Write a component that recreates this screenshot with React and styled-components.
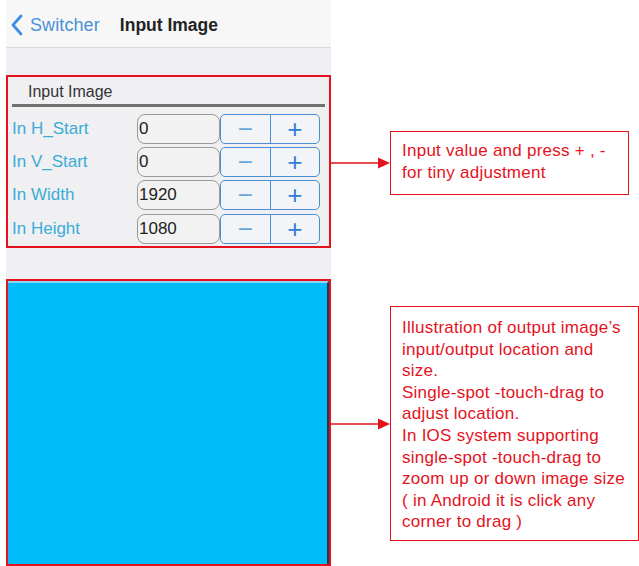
import React from 'react'
import styled, { createGlobalStyle } from 'styled-components'

const GlobalStyle = createGlobalStyle`
  html, body { margin: 0; padding: 0; background: #ffffff; }
  body { font-family: "Liberation Sans", Arial, sans-serif; }
`

const RED = '#e5121d'

const rows = [
  { label: 'In H_Start', value: '0' },
  { label: 'In V_Start', value: '0' },
  { label: 'In Width', value: '1920' },
  { label: 'In Height', value: '1080' },
]

const App = () => {
  return (
    <Page>
      <GlobalStyle />
      <Phone>
        <NavBar>
          <Back>
            <svg width="13" height="22" viewBox="0 0 13 22">
              <path d="M11 2 L3 11 L11 20" fill="none" stroke="#3f8ee0" strokeWidth="2.8" strokeLinecap="round" strokeLinejoin="round" />
            </svg>
            <span>Switcher</span>
          </Back>
          <Title>Input Image</Title>
        </NavBar>
        <Marked $top={27}>
          <Panel>
            <PanelHead>Input Image</PanelHead>
            {rows.map((r) => (
              <Row key={r.label}>
                <Label>{r.label}</Label>
                <Field>{r.value}</Field>
                <Stepper>
                  <StepBtn $minus>&minus;</StepBtn>
                  <StepBtn>+</StepBtn>
                </Stepper>
              </Row>
            ))}
          </Panel>
        </Marked>
        <Marked $top={31} $grow>
          <Preview />
        </Marked>
      </Phone>

      <Notes>
        <Note $top={131}>
          <Arrow>
            <svg width="59" height="14" viewBox="0 0 59 14">
              <line x1="0" y1="7" x2="48" y2="7" stroke={RED} strokeWidth="1.6" />
              <path d="M47 1.5 L59 7 L47 12.5 Z" fill={RED} />
            </svg>
          </Arrow>
          <NoteBox $w={239} $h={64} $pt={8}>
            Input value and press + , -<br />
            for tiny adjustment
          </NoteBox>
        </Note>
        <Note $top={111}>
          <Arrow>
            <svg width="59" height="14" viewBox="0 0 59 14">
              <line x1="0" y1="7" x2="48" y2="7" stroke={RED} strokeWidth="1.6" />
              <path d="M47 1.5 L59 7 L47 12.5 Z" fill={RED} />
            </svg>
          </Arrow>
          <NoteBox $w={249} $h={235} $pt={10}>
            Illustration of output image’s<br />
            input/output location and<br />
            size.<br />
            Single-spot -touch-drag to<br />
            adjust location.<br />
            In IOS system supporting<br />
            single-spot -touch-drag to<br />
            zoom up or down image size<br />
            ( in Android it is click any<br />
            corner to drag )
          </NoteBox>
        </Note>
      </Notes>
    </Page>
  )
}

const Page = styled.div`
  display: flex;
  width: 639px;
  height: 566px;
  overflow: hidden;
  background: #ffffff;
`

const Phone = styled.div`
  margin-left: 6px;
  width: 325px;
  flex-shrink: 0;
  display: flex;
  flex-direction: column;
  background: #efeff4;
`

const NavBar = styled.div`
  height: 48px;
  box-sizing: border-box;
  display: flex;
  align-items: center;
  background: #f7f7f8;
  border-bottom: 1px solid #d9d9de;
  padding: 3px 0 0 4px;
`

const Back = styled.div`
  display: flex;
  align-items: center;
  gap: 7px;
  color: #4a90d6;
  font-size: 18px;
  span { letter-spacing: 0.1px; }
`

const Title = styled.div`
  margin-left: 20px;
  font-size: 17.5px;
  font-weight: 700;
  color: #222;
`

const Marked = styled.div`
  margin-top: ${(p) => p.$top}px;
  border: 2px solid ${RED};
  display: flex;
  flex-direction: column;
  ${(p) => (p.$grow ? 'flex: 1;' : '')}
`

const Panel = styled.div`
  background: #f0f0f3;
  padding: 0 4px 0 4px;
  height: 169px;
  box-sizing: border-box;
`

const PanelHead = styled.div`
  height: 27px;
  padding-left: 16px;
  font-size: 16px;
  line-height: 30px;
  color: #333;
  border-bottom: 3px solid #717171;
  margin-bottom: 5px;
`

const Row = styled.div`
  display: flex;
  align-items: center;
  height: 33.3px;
`

const Label = styled.div`
  width: 125px;
  font-size: 17px;
  color: #3aacd7;
`

const Field = styled.div`
  width: 83px;
  height: 30px;
  box-sizing: border-box;
  border: 1px solid #9a9a9a;
  border-radius: 8px;
  background: #f2f2f2;
  font-size: 17px;
  line-height: 28px;
  color: #222;
  padding-left: 1px;
`

const Stepper = styled.div`
  display: flex;
  width: 100px;
  height: 30px;
  box-sizing: border-box;
  border: 1.5px solid #4a8fd4;
  border-radius: 5px;
  overflow: hidden;
  background: #f3f4f7;
`

const StepBtn = styled.div`
  flex: 1;
  display: flex;
  align-items: center;
  justify-content: center;
  font-size: 26px;
  line-height: 1;
  color: ${(p) => (p.$minus ? '#6aa3dc' : '#2f7fd4')};
  ${(p) => (p.$minus ? 'border-right: 1.5px solid #4a8fd4;' : '')}
`

const Preview = styled.div`
  flex: 1;
  background: #00bcf9;
  border-top: 2px solid #8ad7f7;
  border-right: 2px solid #1b3b52;
`

const Notes = styled.div`
  display: flex;
  flex-direction: column;
`

const Note = styled.div`
  display: flex;
  align-items: center;
  margin-top: ${(p) => p.$top}px;
`

const Arrow = styled.div`
  width: 59px;
  height: 14px;
  display: flex;
  svg { display: block; }
`

const NoteBox = styled.div`
  width: ${(p) => p.$w}px;
  height: ${(p) => p.$h}px;
  box-sizing: border-box;
  border: 1.5px solid ${RED};
  padding: ${(p) => p.$pt}px 0 0 11px;
  color: ${RED};
  font-size: 17px;
  letter-spacing: 0.25px;
  line-height: 21.6px;
  white-space: nowrap;
`

export default App
